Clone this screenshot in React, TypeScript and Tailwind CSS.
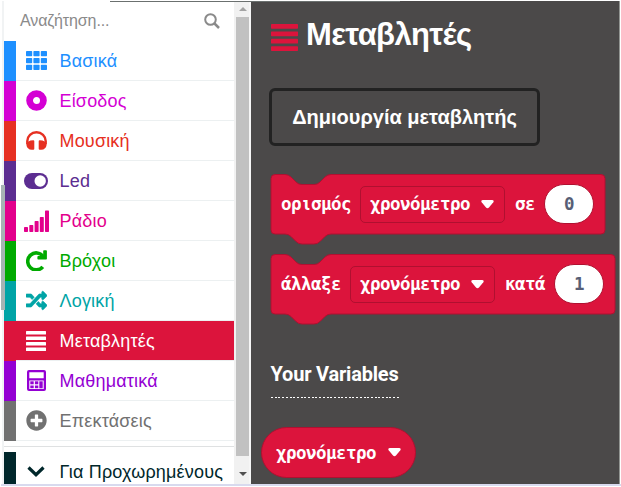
import type { ReactNode } from "react";
import { FaRandom, FaPlusCircle } from "react-icons/fa";

const SearchIcon = () => (
  <svg width="16" height="16" viewBox="0 0 16 16" fill="none" stroke="currentColor">
    <circle cx="6.5" cy="6.5" r="5.3" strokeWidth="2" />
    <path d="m10.500 10.500 4.500 4.500" strokeWidth="2.500" />
  </svg>
);

const GridIcon = () => (
  <svg width="21" height="19" viewBox="0 0 21 19" fill="currentColor">
    {[0, 7, 13.8].map((y) =>
      [0, 7.4, 14.8].map((x) => (
        <rect key={`${x}-${y}`} x={x} y={y} width="6.2" height="5.2" rx="0.7" />
      )),
    )}
  </svg>
);

const RingIcon = () => (
  <svg width="21" height="21" viewBox="0 0 21 21">
    <circle cx="10.5" cy="10.5" r="6.9" fill="none" stroke="currentColor" strokeWidth="6.8" />
  </svg>
);

const HeadphonesIcon = () => (
  <svg width="21" height="19" viewBox="0 0 21 19">
    <path d="M1.300 13V10a9.200 8.700 0 0 1 18.400 0v3" fill="none" stroke="currentColor" strokeWidth="2.400" />
    <path
      d="M8.300 10.300v7.500q0 1-1 1H5.800Q1 18.600 .3 13.500 1 9.500 7.300 9.300q1 0 1 1ZM12.700 10.300v7.500q0 1 1 1h1.500q4.800-.2 5.500-5.300-.7-4-7-4.200-1 0-1 1Z"
      fill="currentColor"
    />
  </svg>
);

const ToggleIcon = () => (
  <svg width="24" height="16" viewBox="0 0 24 16">
    <rect width="24" height="16" rx="8" fill="currentColor" />
    <circle cx="16.2" cy="8" r="5.7" fill="white" />
  </svg>
);

const RedoIcon = () => (
  <svg width="21" height="21" viewBox="0 0 21 21">
    <path d="M17 6.300A8.500 8.500 0 1 0 16.800 16.800" fill="none" stroke="currentColor" strokeWidth="3.600" />
    <path d="M18 .3h2q.9 0 .9.8v7.600q0 .8-.8.8h-7.900q-.8 0-.8-.8V6.900q0-.8.8-.8H17.200V1.100q0-.8.8-.8Z" fill="currentColor" />
  </svg>
);

const SignalIcon = () => (
  <svg width="25" height="22" viewBox="0 0 25 22" fill="currentColor">
    <rect x="0" y="17" width="4" height="5" rx="0.7" />
    <rect x="5.3" y="15" width="4" height="7" rx="0.7" />
    <rect x="10.6" y="11" width="4" height="11" rx="0.7" />
    <rect x="15.8" y="7" width="4" height="15" rx="0.7" />
    <rect x="21" y="0.5" width="4" height="21.5" rx="0.7" />
  </svg>
);

const BarsIcon = ({ className = "" }: { className?: string }) => (
  <svg className={className} width="20" height="20" viewBox="0 0 20 20" fill="currentColor">
    <rect x="0" y="0" width="20" height="3.5" rx="0.5" />
    <rect x="0" y="5.5" width="20" height="3.500" rx="0.5" />
    <rect x="0" y="11" width="20" height="3.500" rx="0.5" />
    <rect x="0" y="16.5" width="20" height="3.500" rx="0.5" />
  </svg>
);

const CalculatorIcon = () => (
  <svg width="19" height="21" viewBox="0 0 19 21">
    <path
      fill="currentColor"
      fillRule="evenodd"
      d="M2 0h15a2 2 0 0 1 2 2v17a2 2 0 0 1-2 2H2a2 2 0 0 1-2-2V2a2 2 0 0 1 2-2ZM2.300 2.300v6h14.400v-6ZM2.300 10.500V19h14.400v-8.500Z"
    />
    <g fill="currentColor">
      <rect x="3.300" y="11.300" width="3.400" height="3" />
      <rect x="7.900" y="11.300" width="3.400" height="3" />
      <rect x="12.300" y="11.300" width="3.400" height="7" />
      <rect x="3.300" y="15.500" width="3.400" height="2.700" />
      <rect x="7.900" y="15.500" width="3.400" height="2.700" />
    </g>
  </svg>
);

const ChevronIcon = () => (
  <svg width="18" height="11" viewBox="0 0 18 11">
    <path d="M1.500 1.500 9 8.700l7.500-7.200" fill="none" stroke="currentColor" strokeWidth="3.200" />
  </svg>
);

type Category = { label: string; text: string; strip: string; icon: ReactNode; active?: boolean };

const categories: Category[] = [
  { label: "Βασικά", text: "text-[#1e90ff]", strip: "bg-[#1e90ff]", icon: <GridIcon /> },
  { label: "Είσοδος", text: "text-[#d400d4]", strip: "bg-[#d400d4]", icon: <RingIcon /> },
  { label: "Μουσική", text: "text-[#e63022]", strip: "bg-[#e63022]", icon: <HeadphonesIcon /> },
  { label: "Led", text: "text-[#5c2d91]", strip: "bg-[#5c2d91]", icon: <ToggleIcon /> },
  { label: "Ράδιο", text: "text-[#e3008c]", strip: "bg-[#e3008c]", icon: <SignalIcon /> },
  { label: "Βρόχοι", text: "text-[#00aa00]", strip: "bg-[#00aa00]", icon: <RedoIcon /> },
  {
    label: "Λογική",
    text: "text-[#00a4a6]",
    strip: "bg-[#00a4a6]",
    icon: <FaRandom size={21} stroke="currentColor" strokeWidth={14} />,
  },
  { label: "Μεταβλητές", text: "text-white", strip: "bg-[#dc143c]", icon: <BarsIcon />, active: true },
  { label: "Μαθηματικά", text: "text-[#9400d3]", strip: "bg-[#9400d3]", icon: <CalculatorIcon /> },
  { label: "Επεκτάσεις", text: "text-[#717171]", strip: "bg-[#717171]", icon: <FaPlusCircle size={21} /> },
];

function CategoryRow({ label, text, strip, icon, active }: Category) {
  return (
    <div className={`flex h-10 w-[230px] ${text}`}>
      <div className={`w-3 shrink-0 ${strip}`} />
      <div
        className={`flex flex-1 items-center border-b border-[#ecf0f1] text-lg leading-none ${active ? "bg-[#dc143c]" : "bg-white"}`}
      >
        <span className="flex w-10 justify-center">{icon}</span>
        <span className="pl-[3.500px] tracking-[0.18px] whitespace-nowrap">{label}</span>
      </div>
    </div>
  );
}

const Caret = () => (
  <svg className="shrink-0" width="13" height="9" viewBox="0 0 13 9">
    <path d="M1.700 0h9.600q2.300 .4 1 2.300L8.200 7.300Q6.500 9 4.800 7.300L.7 2.300Q-.6.4 1.700 0Z" fill="white" />
  </svg>
);

const mono =
  "font-['DejaVu_Sans_Mono',monospace] text-[17.500px] tracking-[-0.54px] leading-5 font-bold text-white whitespace-nowrap";

function Block({ before, after, value, width }: { before: string; after: string; value: string; width: number }) {
  return (
    <div className="relative h-[80px]" style={{ width }}>
      <svg className="absolute top-0 left-0" width={width} height="72" viewBox={`0 0 ${width} 72`}>
        <path
          d={`M5 .5H15Q18.500 .5 21 3L26 8Q28.500 10.500 32 10.500H44Q47.500 10.500 50 8L55 3Q57.500 .5 61 .5H${width - 5}q4 0 4 4V56q0 4-4 4H61Q57.500 60 55 62.500L50 67.500Q47.500 70 44 70H32Q28.500 70 26 67.500L21 62.500Q18.500 60 15 60H5q-4 0-4-4V4.500q0-4 4-4Z`}
          fill="#dc143c"
          stroke="#b01030"
        />
      </svg>
      <div className={`relative flex h-[60px] items-center gap-2.5 pl-[11px] ${mono}`}>
        <span>{before}</span>
        <div className="-ml-px flex h-[37px] w-[145px] items-center gap-[11px] rounded-[5px] border border-[#b01030] pl-[9px]">
          <span>χρονόμετρο</span>
          <Caret />
        </div>
        <span>{after}</span>
        <div className="-ml-px flex h-10 w-[50px] items-center justify-center rounded-[20px] border border-[#b01030] bg-white text-[#575e75]">
          {value}
        </div>
      </div>
    </div>
  );
}

export default function App() {
  return (
    <div className="relative h-[487px] w-[621px] overflow-hidden bg-white font-['Liberation_Sans',sans-serif]">
      <div className="flex h-[484px] pt-px pl-[2px]">
        <aside className="flex h-[483px] w-[249px] border-l-2 border-[#f1f3f4]">
          <div className="w-[230px] overflow-hidden bg-white">
            <div className="flex h-10 items-center justify-between pr-[14px] pl-4 text-[#8a8a8a]">
              <span className="text-base tracking-[-0.1px]">Αναζήτηση...</span>
              <SearchIcon />
            </div>
            {categories.map((c) => (
              <CategoryRow key={c.label} {...c} />
            ))}
            <div className="mt-[5px] mb-[5px] h-px bg-[#dfe1e2]" />
            <CategoryRow label="Για Προχωρημένους" text="text-[#00272b]" strip="bg-[#00272b]" icon={<ChevronIcon />} />
          </div>
          <div className="flex w-[15px] flex-col items-center border-l-2 border-[#f1f1f1] bg-[#f1f1f1]">
            <div className="flex h-4 items-center justify-center">
              <svg width="8" height="4" viewBox="0 0 8 4">
                <path d="M0 4 4 0l4 4Z" fill="#a3a3a3" />
              </svg>
            </div>
            <div className="h-[439px] w-[13px] bg-[#c1c1c1]" />
            <div className="flex flex-1 items-center pt-2 pb-[1px]">
              <svg width="8" height="4" viewBox="0 0 8 4">
                <path d="M0 0h8L4 4Z" fill="#505050" />
              </svg>
            </div>
          </div>
          <div className="w-[2px] bg-[#f6f6f6]" />
        </aside>
        <main className="h-[483px] w-[369px] border-r border-[#929592] bg-[#4b4949] pl-[20px]">
          <h1 className="flex h-[70px] items-center gap-[8px] text-white">
            <span className="w-[27px] text-[#dc143c]">
              <BarsIcon className="mt-[3px] h-[27px] w-[27px]" />
            </span>
            <span className="-mt-[3px] text-[31px] tracking-[-0.62px] leading-9 font-bold">Μεταβλητές</span>
          </h1>
          <button className="mt-[17px] -ml-[2px] block h-[58px] w-[271px] rounded-md border-[3.500px] border-[#222] text-center text-[20px] font-bold text-white">
            Δημιουργία μεταβλητής
          </button>
          <div className="mt-[28px] -ml-px">
            <Block before="ορισμός" after="σε" value="0" width={336} />
            <Block before="άλλαξε" after="κατά" value="1" width={346} />
          </div>
          <div className="mt-[26px] h-[37px] w-[128px] -ml-[0.500px] font-['Roboto',sans-serif] text-xl leading-7 font-bold tracking-[-0.2px] whitespace-nowrap text-white">
            Your Variables
          </div>
          <div className="h-px w-[128px] bg-[repeating-linear-gradient(90deg,#fff_0_2px,transparent_2px_3.700px)]" />
          <div className={`mt-[29px] -ml-[10px] flex h-[51px] w-[155px] items-center gap-[12px] rounded-full border border-[#b01030] bg-[#dc143c] pl-[14px] ${mono}`}>
            <span>χρονόμετρο</span>
            <Caret />
          </div>
        </main>
      </div>
      <div className="ml-px h-[2px] bg-[#d8daee]" />
      <div className="absolute top-px left-[110px] h-px w-[290px] bg-[#6b706f]" />
      <div className="absolute top-[185px] left-[1px] h-[125px] w-1 bg-[#a6b4b4]" />
    </div>
  );
}
